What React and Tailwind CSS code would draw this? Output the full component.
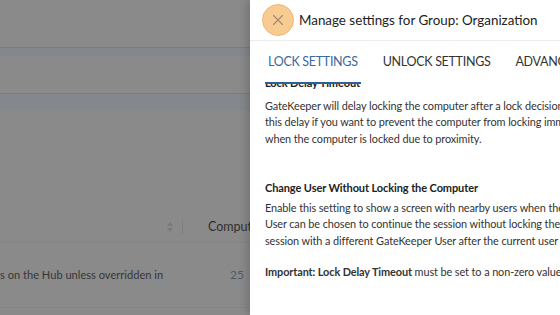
import React from "react";

function CloseX() {
  return (
    <svg width="12" height="12" viewBox="0 0 12 12" fill="none">
      <path d="M1.5 1.5 L10.5 10.5 M10.5 1.5 L1.5 10.5" stroke="#a08a70" strokeWidth="1.1" strokeLinecap="round" />
    </svg>
  );
}

function SortIcon() {
  return (
    <svg width="8" height="12" viewBox="0 0 8 12">
      <path d="M4 1 L7 5 L1 5 Z" fill="#7a7a7a" />
      <path d="M4 11 L7 7 L1 7 Z" fill="#7a7a7a" />
    </svg>
  );
}

export default function App() {
  const font = { fontFamily: 'Lato, "Noto Sans", sans-serif' };
  return (
    <div className="relative w-[560px] h-[315px] overflow-hidden bg-[#8a8a8a]" style={font}>
      {/* dimmed page */}
      <div className="flex flex-col w-full">
        <div className="h-[47px]" />
        <div className="h-px bg-[#7b7c7e]" />
        <div className="h-[8px] bg-[#84878b]" />
        <div className="h-[37px]" />
        <div className="h-px bg-[#7b7c7e]" />
        <div className="h-[16px] bg-[#84878b]" />
        <div className="h-[102px]" />
        <div className="h-[30px] flex items-center">
          <div className="w-[166px]" />
          <SortIcon />
          <div className="w-px h-[14px] bg-[#7f7f7f] ml-[8px]" />
          <div className="ml-[25px] text-[12.5px] text-[#2e2e2e] whitespace-nowrap">Compute</div>
        </div>
        <div className="h-px bg-[#858585]" />
        <div className="h-[64px] flex items-center">
          <div className="w-[230px] text-[11.1px] text-[#363636] whitespace-nowrap">s on the Hub unless overridden in</div>
          <div className="text-[12px] text-[#4d5a6b]">25</div>
        </div>
        <div className="h-px bg-[#858585]" />
      </div>

      {/* drawer */}
      <div className="absolute top-0 left-[250px] h-full w-[420px] bg-white shadow-[-3px_0_8px_rgba(0,0,0,0.18)] flex flex-col overflow-hidden">
        <div className="h-[41px] shrink-0 flex items-center border-b border-[#ececec] pl-[12px]">
          <div className="w-[32px] h-[32px] rounded-full bg-[#f8cb92] border border-[#f0b878] flex items-center justify-center">
            <CloseX />
          </div>
          <div className="ml-[5px] text-[13.4px] text-[#222] whitespace-nowrap">Manage settings for Group: Organization</div>
        </div>
        <div className="h-[43px] shrink-0 flex items-stretch pl-[15px] relative z-10 bg-white">
          <div className="relative flex items-center px-[3px] text-[12.5px] tracking-[-0.3px] text-[#3a68a0] whitespace-nowrap">
            LOCK SETTINGS
            <div className="absolute left-0 right-0 bottom-0 h-[2px] bg-[#2f5f98]" />
          </div>
          <div className="flex items-center ml-[22px] text-[12.5px] tracking-[-0.3px] text-[#333] whitespace-nowrap">UNLOCK SETTINGS</div>
          <div className="flex items-center ml-[25px] text-[12.5px] tracking-[-0.3px] text-[#333] whitespace-nowrap">ADVANCED SETTINGS</div>
        </div>
        <div className="flex-1 overflow-hidden">
          <div className="mt-[-9px] pl-[15px] text-[10.9px] leading-[16.5px] tracking-[-0.1px] text-[#333] whitespace-nowrap">
            <div className="font-bold text-[11px] text-[#222]">Lock Delay Timeout</div>
            <div className="mt-[6px]">GateKeeper will delay locking the computer after a lock decision is made. Set</div>
            <div>this delay if you want to prevent the computer from locking immediately, such as</div>
            <div>when the computer is locked due to proximity.</div>
            <div className="mt-[33px] font-bold text-[11px] text-[#222]">Change User Without Locking the Computer</div>
            <div className="mt-[3px]">Enable this setting to show a screen with nearby users when the computer is locking.</div>
            <div>User can be chosen to continue the session without locking the computer, or start a</div>
            <div>session with a different GateKeeper User after the current user moves away.</div>
            <div className="mt-[15px]"><span className="font-bold">Important: Lock Delay Timeout</span> must be set to a non-zero value.</div>
          </div>
        </div>
      </div>
    </div>
  );
}
